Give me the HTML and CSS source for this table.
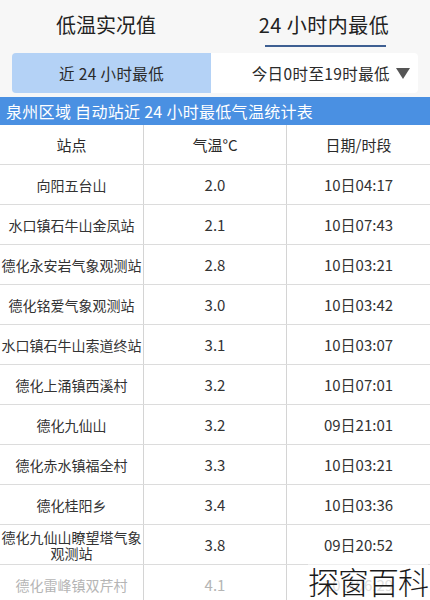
FILE: index.html
```html
<!DOCTYPE html>
<html lang="zh">
<head>
<meta charset="utf-8">
<link rel="stylesheet" href="styles.css">
</head>
<body>
<div class="page">
  <div class="tabs">
    <div class="tab">低温实况值</div>
    <div class="tab active">24 小时内最低</div>
  </div>
  <div class="filter">
    <div class="seg seg-on">近 24 小时最低</div>
    <div class="seg seg-off">今日0时至19时最低<span class="tri"></span></div>
  </div>
  <div class="title">泉州区域 自动站近 24 小时最低气温统计表</div>
  <div class="table">
    <div class="row head"><div class="cell">站点</div><div class="cell">气温°C</div><div class="cell">日期/时段</div></div>
    <div class="row"><div class="cell">向阳五台山</div><div class="cell">2.0</div><div class="cell">10日04:17</div></div>
    <div class="row"><div class="cell">水口镇石牛山金凤站</div><div class="cell">2.1</div><div class="cell">10日07:43</div></div>
    <div class="row"><div class="cell">德化永安岩气象观测站</div><div class="cell">2.8</div><div class="cell">10日03:21</div></div>
    <div class="row"><div class="cell">德化铭爱气象观测站</div><div class="cell">3.0</div><div class="cell">10日03:42</div></div>
    <div class="row"><div class="cell">水口镇石牛山索道终站</div><div class="cell">3.1</div><div class="cell">10日03:07</div></div>
    <div class="row"><div class="cell">德化上涌镇西溪村</div><div class="cell">3.2</div><div class="cell">10日07:01</div></div>
    <div class="row"><div class="cell">德化九仙山</div><div class="cell">3.2</div><div class="cell">09日21:01</div></div>
    <div class="row"><div class="cell">德化赤水镇福全村</div><div class="cell">3.3</div><div class="cell">10日03:21</div></div>
    <div class="row"><div class="cell">德化桂阳乡</div><div class="cell">3.4</div><div class="cell">10日03:36</div></div>
    <div class="row"><div class="cell">德化九仙山瞭望塔气象观测站</div><div class="cell">3.8</div><div class="cell">09日20:52</div></div>
    <div class="row faded"><div class="cell">德化雷峰镇双芹村</div><div class="cell">4.1</div><div class="cell">10日06:29</div></div>
  </div>
  <div class="watermark">探窗百科</div>
</div>
</body>
</html>
```
FILE: styles.css
```css
* { box-sizing: border-box; }
html, body { margin: 0; padding: 0; }
body {
  background: #f7f7f7;
  font-family: "Noto Sans CJK SC", "Noto Sans", sans-serif;
  color: #2a2a2a;
  width: 430px;
  height: 600px;
  overflow: hidden;
}
.page { position: relative; height: 600px; }
.tabs {
  display: flex;
  height: 53px;
}
.tab {
  flex: 1;
  text-align: center;
  font-size: 20px;
  line-height: 20px;
  padding-top: 15px;
  color: #222;
  position: relative;
  white-space: pre;
}
.tab:first-child { padding-right: 6px; }
.tab.active { letter-spacing: 0.5px; }
.tab.active::after {
  content: "";
  position: absolute;
  left: 47px;
  top: 45px;
  width: 121px;
  height: 2px;
  background: #3e5f92;
}
.filter {
  display: flex;
  height: 40px;
  margin: 0 12px;
}
.seg {
  flex: 1;
  display: flex;
  align-items: center;
  justify-content: center;
  font-size: 15.5px;
  letter-spacing: 0.4px;
  color: #2a2a2a;
  white-space: pre;
}
.seg-on {
  background: #b4d2f6;
  border-radius: 4px 0 0 4px;
}
.seg-off {
  background: #fff;
  justify-content: flex-end;
  padding-right: 8px;
  border-radius: 0 4px 4px 0;
}
.tri {
  display: inline-block;
  width: 0;
  height: 0;
  margin-left: 6px;
  border-left: 7px solid transparent;
  border-right: 7px solid transparent;
  border-top: 11px solid #555;
}
.title {
  margin-top: 4px;
  height: 28px;
  background: #4a90e2;
  color: #fff;
  font-size: 16px;
  line-height: 28px;
  letter-spacing: 0.3px;
  padding-left: 6px;
  white-space: pre;
}
.table { background: #fff; }
.row {
  display: grid;
  grid-template-columns: 144px 143px 143px;
  height: 40px;
  border-bottom: 1.5px solid #dcdcdc;
}
.cell {
  display: flex;
  align-items: center;
  justify-content: center;
  text-align: center;
  font-size: 14px;
  line-height: 16px;
  color: #333;
  border-right: 1.5px solid #d4d4d4;
  padding: 0 1px;
}
.cell:last-child { border-right: none; }
.row .cell:nth-child(n+2) { font-size: 15px; }
.row.head .cell { font-size: 15px; color: #2a2a2a; }
.row.faded .cell { color: #b5b5b5; }
.watermark {
  position: absolute;
  right: 2px;
  bottom: 2px;
  font-size: 31px;
  line-height: 34px;
  font-weight: 300;
  color: #1a1a1a;
  background: rgba(255,255,255,0.55);
  letter-spacing: -1px;
}
```
